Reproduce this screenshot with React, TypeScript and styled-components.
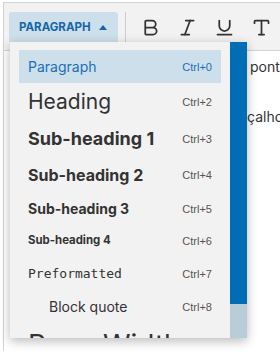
import React from "react";
import styled, { createGlobalStyle } from "styled-components";
import { Bold, Italic, Underline, Type } from "lucide-react";

const Global = createGlobalStyle`
  html, body { margin: 0; padding: 0; background: #ffffff; }
  body { font-family: Inter, "Liberation Sans", sans-serif; color: #333; overflow: hidden; }
  #root { width: 280px; height: 351px; position: relative; overflow: hidden; }
`;

const Frame = styled.div`
  margin: 2px 0 0 3px;
  border-top: 1px solid #d2d2d2;
  border-left: 1px solid #d2d2d2;
  height: 349px;
  display: flex;
  flex-direction: column;
`;

const Toolbar = styled.div`
  background: #f2f2f2;
  border-bottom: 1px solid #d2d2d2;
  display: flex;
  align-items: flex-start;
  padding: 9px 0 0 5px;
  box-sizing: border-box;
  height: 48px;
`;

const StyleButton = styled.button`
  width: 112px;
  height: 30px;
  border: none;
  border-radius: 3px 3px 0 0;
  background: #cddfea;
  color: #1466a8;
  font-family: Inter, sans-serif;
  font-weight: 700;
  font-size: 11.5px;
  display: flex;
  align-items: center;
  padding: 0 0 0 10px;
  gap: 8px;
  cursor: pointer;
`;

const Caret = styled.span`
  width: 0;
  height: 0;
  border-left: 4px solid transparent;
  border-right: 4px solid transparent;
  border-bottom: 5px solid #1466a8;
`;

const Separator = styled.div`
  width: 1px;
  height: 30px;
  background: #cccccc;
  margin: 0 6px 0 7px;
`;

const IconButton = styled.div`
  width: 38px;
  height: 30px;
  display: flex;
  align-items: center;
  justify-content: center;
  color: #333;
`;

const Content = styled.div`
  flex: 1;
  background: #ffffff;
  padding-top: 4px;
`;

const Line = styled.p<{ $indent: number }>`
  margin: 0 0 26px 0;
  padding-left: ${(p) => p.$indent}px;
  font-size: 14px;
  line-height: 24px;
  white-space: nowrap;
  color: #333;
`;

const Panel = styled.div`
  position: absolute;
  left: 10px;
  top: 42px;
  width: 237px;
  height: 296px;
  background: #f2f2f2;
  box-shadow: 0 3px 10px rgba(0, 0, 0, 0.28);
  display: flex;
  overflow: hidden;
`;

const List = styled.div`
  width: 220px;
  padding: 8px 9px 0 9px;
  box-sizing: border-box;
  display: flex;
  flex-direction: column;
`;

const Item = styled.div<{ $h: number; $active?: boolean }>`
  flex: none;
  height: ${(p) => p.$h}px;
  display: flex;
  align-items: center;
  justify-content: space-between;
  padding: 0 9px;
  background: ${(p) => (p.$active ? "#cddfea" : "transparent")};
  color: ${(p) => (p.$active ? "#1a6fb5" : "#333")};
  white-space: nowrap;
`;

const Label = styled.span<{ $size: number; $weight?: number; $mono?: boolean; $indent?: number }>`
  font-size: ${(p) => p.$size}px;
  font-weight: ${(p) => p.$weight ?? 400};
  font-family: ${(p) => (p.$mono ? '"DejaVu Sans Mono", monospace' : "Inter, sans-serif")};
  padding-left: ${(p) => p.$indent ?? 0}px;
  line-height: 1;
`;

const Shortcut = styled.span<{ $active?: boolean }>`
  font-family: "Liberation Sans", Arial, sans-serif;
  font-size: 11px;
  color: ${(p) => (p.$active ? "#1a6fb5" : "#555")};
`;

const Scrollbar = styled.div`
  width: 17px;
  display: flex;
  flex-direction: column;
  background: #b9cdd9;
`;

const Thumb = styled.div`
  height: 262px;
  background: #006db5;
`;

const items = [
  { label: "Paragraph", size: 14, h: 33, key: "Ctrl+0", active: true },
  { label: "Heading", size: 21, h: 37, key: "Ctrl+2" },
  { label: "Sub-heading 1", size: 18, weight: 700, h: 37, key: "Ctrl+3" },
  { label: "Sub-heading 2", size: 16, weight: 700, h: 36, key: "Ctrl+4" },
  { label: "Sub-heading 3", size: 14, weight: 700, h: 32, key: "Ctrl+5" },
  { label: "Sub-heading 4", size: 11.4, weight: 700, h: 32, key: "Ctrl+6" },
  { label: "Preformatted", size: 13, mono: true, h: 33, key: "Ctrl+7" },
  { label: "Block quote", size: 14, indent: 21, h: 33, key: "Ctrl+8" },
  { label: "Page Width", size: 28, h: 44, key: "" },
];

export default function App() {
  return (
    <>
      <Global />
      <Frame>
        <Toolbar>
          <StyleButton>
            PARAGRAPH <Caret />
          </StyleButton>
          <Separator />
          <IconButton>
            <Bold size={21} strokeWidth={2} />
          </IconButton>
          <IconButton>
            <Italic size={21} strokeWidth={2} />
          </IconButton>
          <IconButton>
            <Underline size={21} strokeWidth={2} />
          </IconButton>
          <IconButton>
            <Type size={21} strokeWidth={2} />
          </IconButton>
        </Toolbar>
        <Content>
          <Line $indent={246}>ponto final</Line>
          <Line $indent={243}>çalho do texto</Line>
        </Content>
      </Frame>
      <Panel>
        <List>
          {items.map((it) => (
            <Item key={it.label} $h={it.h} $active={it.active}>
              <Label $size={it.size} $weight={it.weight} $mono={it.mono} $indent={it.indent}>
                {it.label}
              </Label>
              <Shortcut $active={it.active}>{it.key}</Shortcut>
            </Item>
          ))}
        </List>
        <Scrollbar>
          <Thumb />
        </Scrollbar>
      </Panel>
    </>
  );
}
